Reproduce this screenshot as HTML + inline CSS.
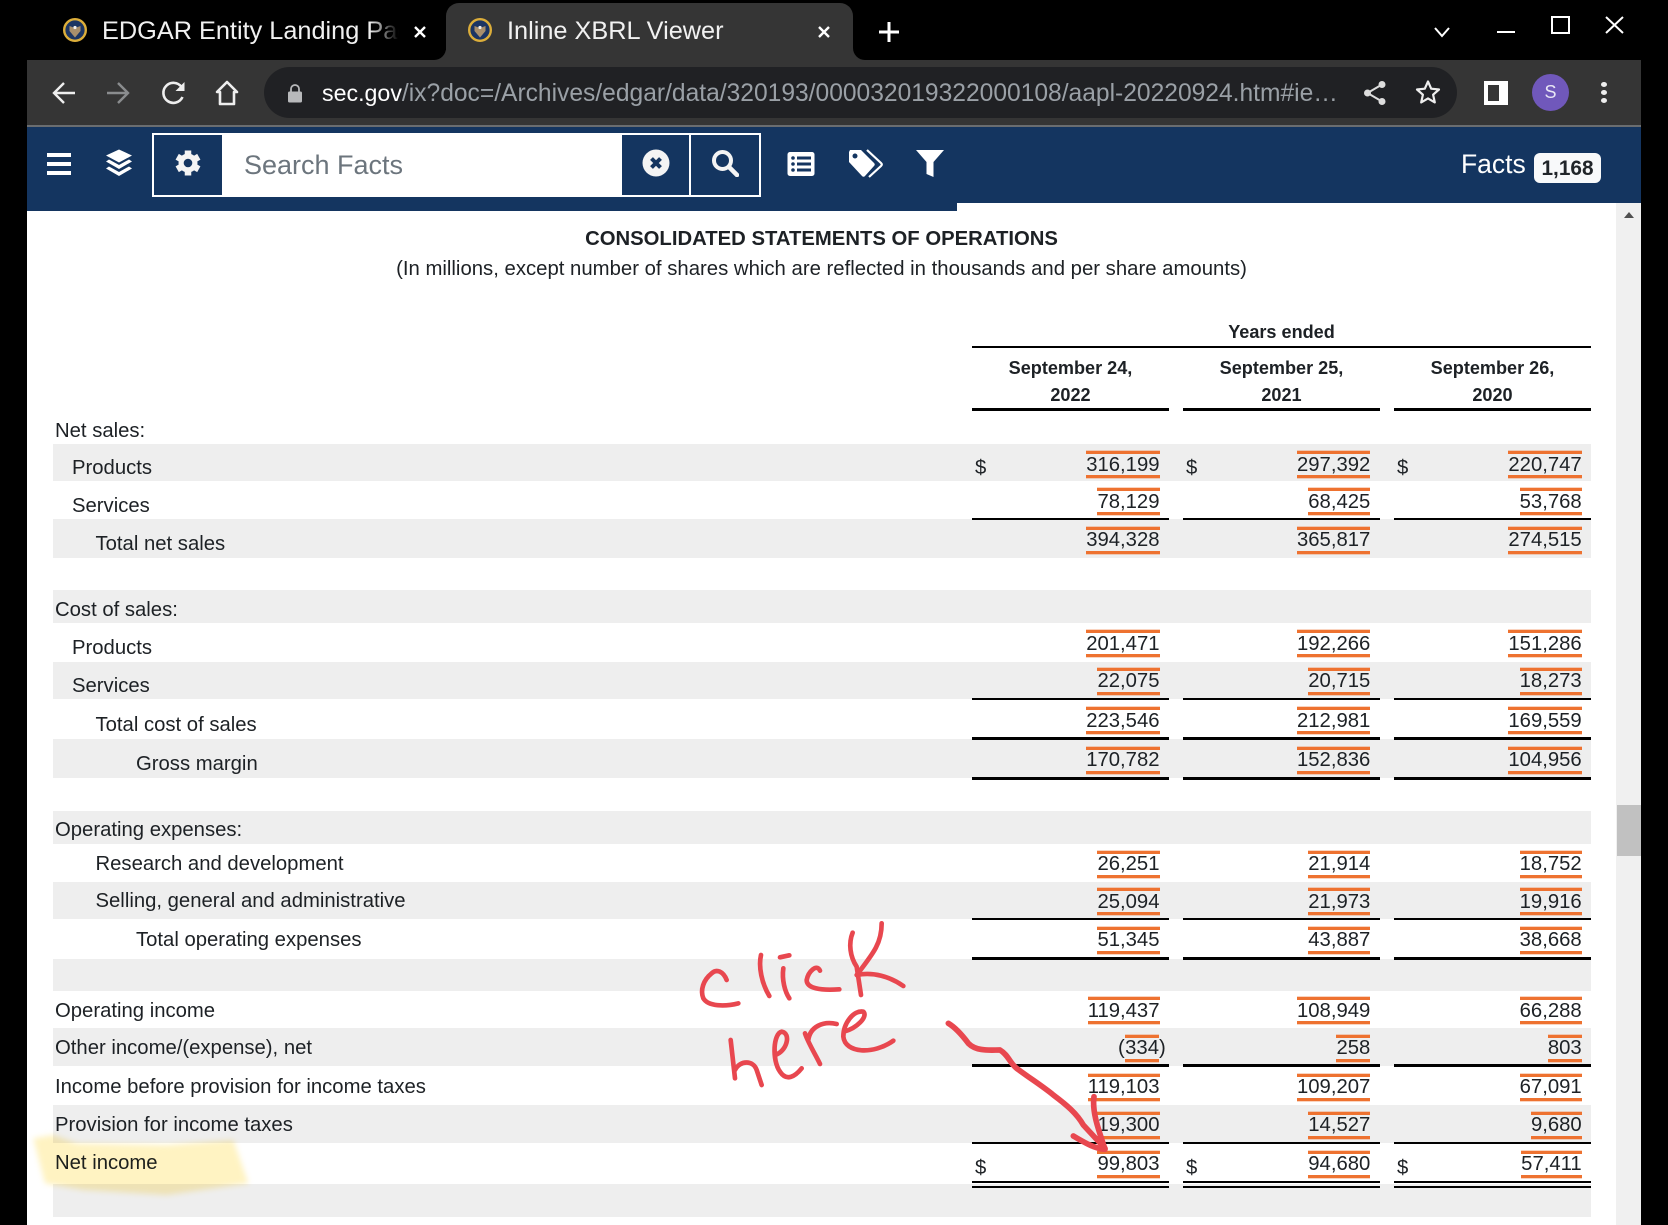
<!DOCTYPE html>
<html>
<head>
<meta charset="utf-8">
<style>
html,body{margin:0;padding:0;background:#000;}
body{position:relative;width:1668px;height:1225px;overflow:hidden;font-family:"Liberation Sans",sans-serif;color:#1d2125;}
div,span,b,svg{position:absolute;}
.bar{background:#eee;left:52.500px;width:1538.500px;}
.ln{background:#000;height:2px;}
.t{height:3px;}
.c1l{left:972px;width:197px;}
.c2l{left:1183px;width:197px;}
.c3l{left:1394px;width:197px;}
.l{font-size:20.300px;line-height:24px;white-space:nowrap;}
.v{font-size:20.300px;line-height:21px;height:21px;font-weight:normal;white-space:nowrap;border-top:3px solid #ee7230;border-bottom:3px solid #ee7230;box-shadow:0 -1px 0 rgba(238,114,48,.3),0 1px 0 rgba(238,114,48,.3);}
.s{line-height:23px;}
.c1{right:508.500px;}
.c2{right:297.700px;}
.c3{right:86.300px;}
.d{font-size:20.300px;line-height:24px;top:456px;}
.h{font-size:18.100px;font-weight:bold;line-height:24px;text-align:center;white-space:nowrap;}
.tabt{font-size:25.300px;line-height:30px;color:#f1f1f1;white-space:nowrap;top:16px;}
</style>
</head>
<body>
<!-- browser chrome -->
<div style="left:446px;top:3px;width:407px;height:60px;background:#353535;border-radius:13px 13px 0 0;"></div>
<div style="left:27px;top:60px;width:1614px;height:65px;background:#353535;"></div>
<div style="left:27px;top:125px;width:1614px;height:2px;background:#6a6d70;"></div>
<div style="left:27px;top:50px;width:419px;height:10px;background:#353535;"></div>
<div style="left:27px;top:40px;width:419px;height:20px;background:#000;border-radius:0 0 12px 0;"></div>
<div style="left:853px;top:40px;width:788px;height:20px;background:#353535;"></div>
<div style="left:853px;top:40px;width:788px;height:20px;background:#000;border-radius:0 0 0 12px;"></div>

<svg style="left:63px;top:18px" width="24" height="24" viewBox="0 0 24 24"><circle cx="12" cy="12" r="10.800" fill="#1c3563" stroke="#dcae3a" stroke-width="2.400"/><path d="M6.500 8l5.500 2 5.500-2v5l-5.500 6.500L6.500 13z" fill="#a98f6c"/><circle cx="12" cy="9.500" r="1.600" fill="#eee"/></svg>
<div class="tabt" style="left:102px;width:297px;overflow:hidden;-webkit-mask-image:linear-gradient(90deg,#000 90%,transparent);mask-image:linear-gradient(90deg,#000 90%,transparent);">EDGAR Entity Landing Page</div>
<svg style="left:413px;top:25px" width="14" height="14" viewBox="0 0 14 14"><path d="M2 2l10 10M12 2L2 12" stroke="#fff" stroke-width="2.400"/></svg>
<svg style="left:468px;top:18px" width="24" height="24" viewBox="0 0 24 24"><circle cx="12" cy="12" r="10.800" fill="#1c3563" stroke="#dcae3a" stroke-width="2.400"/><path d="M6.500 8l5.500 2 5.500-2v5l-5.500 6.500L6.500 13z" fill="#a98f6c"/><circle cx="12" cy="9.500" r="1.600" fill="#eee"/></svg>
<div class="tabt" style="left:507px;">Inline XBRL Viewer</div>
<svg style="left:817px;top:25px" width="14" height="14" viewBox="0 0 14 14"><path d="M2 2l10 10M12 2L2 12" stroke="#fff" stroke-width="2.400"/></svg>
<svg style="left:878px;top:21px" width="22" height="22" viewBox="0 0 22 22"><path d="M11 1v20M1 11h20" stroke="#fff" stroke-width="3"/></svg>
<svg style="left:1433px;top:26px" width="18" height="12" viewBox="0 0 18 12"><path d="M2 2l7 8 7-8" stroke="#fff" stroke-width="2" fill="none"/></svg>
<div style="left:1497px;top:31px;width:18px;height:2px;background:#fff;"></div>
<div style="left:1551px;top:16px;width:15px;height:14px;border:2px solid #fff;"></div>
<svg style="left:1605px;top:16px" width="19" height="18" viewBox="0 0 19 18"><path d="M1 1l17 16M18 1L1 17" stroke="#fff" stroke-width="2"/></svg>

<svg style="left:52px;top:81px" width="24" height="24" viewBox="0 0 24 24"><path d="M23 12H3M12 2L2 12l10 10" stroke="#eee" stroke-width="2.400" fill="none"/></svg>
<svg style="left:106px;top:81px" width="24" height="24" viewBox="0 0 24 24"><path d="M1 12h20M12 2l10 10-10 10" stroke="#8a8c8e" stroke-width="2.400" fill="none"/></svg>
<svg style="left:161px;top:80px" width="25" height="26" viewBox="0 0 25 26"><path d="M21.500 17a10 10 0 1 1-1-10" stroke="#eee" stroke-width="2.600" fill="none"/><path d="M23.500 2v9h-9z" fill="#eee"/></svg>
<svg style="left:215px;top:80px" width="24" height="26" viewBox="0 0 24 26"><path d="M12 2L2 12h3v12h14V12h3z" stroke="#eee" stroke-width="2.600" fill="none" stroke-linejoin="round"/></svg>
<div style="left:264px;top:67px;width:1193px;height:51px;background:#202124;border-radius:26px;"></div>
<svg style="left:287px;top:84px" width="16" height="19" viewBox="0 0 16 19"><path d="M4 8V5a4 4 0 0 1 8 0v3" stroke="#b8b9bb" stroke-width="1.800" fill="none"/><rect x="1" y="7.500" width="14" height="11" rx="1.500" fill="#b8b9bb"/></svg>
<div style="left:322px;top:78px;font-size:24.600px;line-height:30px;white-space:nowrap;color:#9aa0a6;"><span style="position:static;color:#fff;font-size:23.200px;">sec.gov</span>/ix?doc=/Archives/edgar/data/320193/000032019322000108/aapl-20220924.htm#ie…</div>
<svg style="left:1363px;top:80px" width="23" height="26" viewBox="0 0 23 26"><circle cx="19" cy="4.500" r="3.500" fill="#ddd"/><circle cx="4.500" cy="13" r="3.500" fill="#ddd"/><circle cx="19" cy="21.500" r="3.500" fill="#ddd"/><path d="M19 4.500L4.500 13 19 21.500" stroke="#ddd" stroke-width="2" fill="none"/></svg>
<svg style="left:1415px;top:79px" width="26" height="26" viewBox="0 0 26 26"><path d="M13 2.500l3.200 7.200 7.800.8-5.900 5.200 1.700 7.700L13 19.400l-6.800 4 1.700-7.700L2 10.500l7.800-.8z" stroke="#eee" stroke-width="2.200" fill="none" stroke-linejoin="round"/></svg>
<div style="left:1484px;top:81px;width:24px;height:24px;background:#fff;"></div>
<div style="left:1488px;top:85px;width:11px;height:16px;background:#353535;"></div>
<div style="left:1532px;top:74px;width:37px;height:37px;border-radius:50%;background:#7058bb;"></div>
<div style="left:1532px;top:74px;width:37px;height:37px;line-height:37px;text-align:center;color:#e8e6f5;font-size:18px;">S</div>
<div style="left:1601px;top:82px;width:6px;height:5px;border-radius:50%;background:#eee;"></div>
<div style="left:1601px;top:90px;width:6px;height:5px;border-radius:50%;background:#eee;"></div>
<div style="left:1601px;top:98px;width:6px;height:5px;border-radius:50%;background:#eee;"></div>

<!-- content background -->
<div style="left:27px;top:127px;width:1614px;height:1098px;background:#fff;"></div>
<div style="left:27px;top:127px;width:1614px;height:76px;background:#143560;"></div>
<div style="left:27px;top:203px;width:930px;height:8px;background:#143560;"></div>
<div style="left:1616px;top:203px;width:25px;height:1022px;background:#f0f0f0;"></div>
<div style="left:1617px;top:805px;width:24px;height:51px;background:#c1c1c1;"></div>
<svg style="left:1623px;top:211px" width="12" height="8" viewBox="0 0 12 8"><path d="M6 1l5 6H1z" fill="#505050"/></svg>

<!-- xbrl toolbar -->
<div style="left:47px;top:153px;width:24px;height:4px;background:#fff;"></div>
<div style="left:47px;top:162px;width:24px;height:4px;background:#fff;"></div>
<div style="left:47px;top:171px;width:24px;height:4px;background:#fff;"></div>
<svg style="left:105px;top:149px" width="28" height="29" viewBox="0 0 28 29"><path d="M14 .5L27 6.500 14 13.500 1 6.500z" fill="#fff"/><path d="M4 10.500L1 12.500 14 20 27 12.500 24 10.500 14 16z" fill="#fff"/><path d="M4 17.500L1 19.500 14 27 27 19.500 24 17.500 14 23z" fill="#fff"/></svg>
<div style="left:152px;top:133px;width:605px;height:60px;border:2px solid #fff;"></div>
<div style="left:222px;top:134px;width:400px;height:62px;background:#fff;"></div>
<div style="left:689px;top:134px;width:2px;height:62px;background:#fff;"></div>
<svg style="left:175px;top:150px" width="26" height="26" viewBox="0 0 26 26"><circle cx="13" cy="13" r="9.500" fill="#f4f4f4"/><g stroke="#f4f4f4" stroke-width="6.500"><path d="M13 0.500v25"/><path d="M2.200 6.750l21.600 12.500"/><path d="M23.800 6.750L2.200 19.250"/></g><circle cx="13" cy="13" r="4.300" fill="#143560"/></svg>
<div style="left:244px;top:149px;font-size:27px;line-height:32px;color:#6c757d;white-space:nowrap;">Search Facts</div>
<svg style="left:642px;top:149px" width="28" height="28" viewBox="0 0 28 28"><circle cx="14" cy="14" r="13.500" fill="#f4f4f4"/><path d="M9.500 9.500l9 9M18.500 9.500l-9 9" stroke="#143560" stroke-width="4"/></svg>
<svg style="left:711px;top:149px" width="28" height="28" viewBox="0 0 28 28"><circle cx="11.500" cy="11.500" r="8.500" fill="none" stroke="#f4f4f4" stroke-width="4"/><path d="M18 18l8 8" stroke="#f4f4f4" stroke-width="4.500" stroke-linecap="round"/></svg>
<svg style="left:787px;top:151px" width="28" height="26" viewBox="0 0 28 26"><rect x="0.500" y="1" width="27" height="24" rx="2.500" fill="#fff"/><g fill="#143560"><circle cx="6" cy="7" r="1.800"/><circle cx="6" cy="13" r="1.800"/><circle cx="6" cy="19" r="1.800"/><rect x="10" y="5.500" width="14" height="3"/><rect x="10" y="11.500" width="14" height="3"/><rect x="10" y="17.500" width="14" height="3"/></g></svg>
<svg style="left:848px;top:149px" width="36" height="30" viewBox="0 0 36 30"><path d="M2 1h11l13 13c1 1 1 2 0 3L17 27c-1 1-2 1-3 0L1 13V3z" fill="#fff"/><circle cx="7" cy="7" r="2.500" fill="#143560"/><path d="M19 1l14 13c1 1 1 2 0 3L21 28" stroke="#fff" stroke-width="2.200" fill="none"/></svg>
<svg style="left:916px;top:149px" width="28" height="29" viewBox="0 0 28 29"><path d="M0 1h28L17.500 13v15L10.500 25V13z" fill="#fff"/></svg>
<div style="left:1461px;top:148px;font-size:26.500px;line-height:32px;color:#fff;white-space:nowrap;">Facts</div>
<div style="left:1534px;top:153px;width:67px;height:30px;background:#f8f9fa;border-radius:6px;text-align:center;font-size:20.800px;font-weight:bold;line-height:31px;color:#212529;">1,168</div>

<!-- rows -->
<div class="bar" style="top:444px;height:37px"></div>
<div class="bar" style="top:519px;height:39px"></div>
<div class="bar" style="top:590px;height:33px"></div>
<div class="bar" style="top:662px;height:37px"></div>
<div class="bar" style="top:739px;height:39px"></div>
<div class="bar" style="top:811px;height:33px"></div>
<div class="bar" style="top:882px;height:37px"></div>
<div class="bar" style="top:959px;height:32px"></div>
<div class="bar" style="top:1028px;height:38px"></div>
<div class="bar" style="top:1105px;height:38px"></div>
<div class="bar" style="top:1184px;height:33px"></div>

<!-- headings -->
<div class="h" style="left:27px;width:1589px;top:227px;font-size:20.300px;">CONSOLIDATED STATEMENTS OF OPERATIONS</div>
<div class="h" style="left:27px;width:1589px;top:257px;font-size:20.330px;font-weight:normal;">(In millions, except number of shares which are reflected in thousands and per share amounts)</div>
<div class="h" style="left:972px;width:619px;top:320px;">Years ended</div>
<div class="ln" style="left:972px;width:619px;top:346px;"></div>
<div class="h c1l" style="top:356px;">September 24,</div><div class="h c1l" style="top:383px;">2022</div>
<div class="h c2l" style="top:356px;">September 25,</div><div class="h c2l" style="top:383px;">2021</div>
<div class="h c3l" style="top:356px;">September 26,</div><div class="h c3l" style="top:383px;">2020</div>
<div class="ln c1l" style="top:408px;height:3px"></div><div class="ln c2l" style="top:408px;height:3px"></div><div class="ln c3l" style="top:408px;height:3px"></div>

<!-- labels -->
<div class="l" style="left:55px;top:419px;">Net sales:</div>
<div class="l" style="left:72px;top:456px;">Products</div>
<div class="l" style="left:72px;top:494px;">Services</div>
<div class="l" style="left:95.500px;top:532px;">Total net sales</div>
<div class="l" style="left:55px;top:598px;">Cost of sales:</div>
<div class="l" style="left:72px;top:636px;">Products</div>
<div class="l" style="left:72px;top:674px;">Services</div>
<div class="l" style="left:95.500px;top:713px;">Total cost of sales</div>
<div class="l" style="left:136px;top:752px;">Gross margin</div>
<div class="l" style="left:55px;top:818px;">Operating expenses:</div>
<div class="l" style="left:95.500px;top:852px;">Research and development</div>
<div class="l" style="left:95.500px;top:889px;">Selling, general and administrative</div>
<div class="l" style="left:136px;top:928px;">Total operating expenses</div>
<div class="l" style="left:55px;top:999px;">Operating income</div>
<div class="l" style="left:55px;top:1036px;">Other income/(expense), net</div>
<div class="l" style="left:55px;top:1075px;">Income before provision for income taxes</div>
<div class="l" style="left:55px;top:1113px;">Provision for income taxes</div>
<div class="l" style="left:55px;top:1151px;">Net income</div>

<!-- dollars -->
<div class="d" style="left:975px;">$</div><div class="d" style="left:1186px;">$</div><div class="d" style="left:1397px;">$</div>
<div class="d" style="left:975px;top:1156px;">$</div><div class="d" style="left:1186px;top:1156px;">$</div><div class="d" style="left:1397px;top:1156px;">$</div>

<!-- values -->
<b class="v s c1" style="top:451px">316,199</b><b class="v s c2" style="top:451px">297,392</b><b class="v s c3" style="top:451px">220,747</b>
<b class="v s c1" style="top:488px">78,129</b><b class="v s c2" style="top:488px">68,425</b><b class="v s c3" style="top:488px">53,768</b>
<b class="v c1" style="top:527px">394,328</b><b class="v c2" style="top:527px">365,817</b><b class="v c3" style="top:527px">274,515</b>
<b class="v s c1" style="top:630px">201,471</b><b class="v s c2" style="top:630px">192,266</b><b class="v s c3" style="top:630px">151,286</b>
<b class="v c1" style="top:668px">22,075</b><b class="v c2" style="top:668px">20,715</b><b class="v c3" style="top:668px">18,273</b>
<b class="v s c1" style="top:707px">223,546</b><b class="v s c2" style="top:707px">212,981</b><b class="v s c3" style="top:707px">169,559</b>
<b class="v c1" style="top:747px">170,782</b><b class="v c2" style="top:747px">152,836</b><b class="v c3" style="top:747px">104,956</b>
<b class="v c1" style="top:851px">26,251</b><b class="v c2" style="top:851px">21,914</b><b class="v c3" style="top:851px">18,752</b>
<b class="v s c1" style="top:888px">25,094</b><b class="v s c2" style="top:888px">21,973</b><b class="v s c3" style="top:888px">19,916</b>
<b class="v c1" style="top:927px">51,345</b><b class="v c2" style="top:927px">43,887</b><b class="v c3" style="top:927px">38,668</b>
<b class="v s c1" style="top:997px">119,437</b><b class="v s c2" style="top:997px">108,949</b><b class="v s c3" style="top:997px">66,288</b>
<b class="v" style="top:1035px;right:509px">334</b><div class="l" style="left:1118px;top:1036px;">(</div><div class="l" style="left:1159px;top:1036px;">)</div><b class="v c2" style="top:1035px">258</b><b class="v c3" style="top:1035px">803</b>
<b class="v c1" style="top:1074px">119,103</b><b class="v c2" style="top:1074px">109,207</b><b class="v c3" style="top:1074px">67,091</b>
<b class="v c1" style="top:1112px">19,300</b><b class="v c2" style="top:1112px">14,527</b><b class="v c3" style="top:1112px">9,680</b>
<b class="v c1" style="top:1151px">99,803</b><b class="v c2" style="top:1151px">94,680</b><b class="v c3" style="top:1151px">57,411</b>

<!-- lines -->
<div class="ln c1l" style="top:518px"></div><div class="ln c2l" style="top:518px"></div><div class="ln c3l" style="top:518px"></div>
<div class="ln c1l" style="top:698px"></div><div class="ln c2l" style="top:698px"></div><div class="ln c3l" style="top:698px"></div>
<div class="ln t c1l" style="top:737px"></div><div class="ln t c2l" style="top:737px"></div><div class="ln t c3l" style="top:737px"></div>
<div class="ln t c1l" style="top:777px"></div><div class="ln t c2l" style="top:777px"></div><div class="ln t c3l" style="top:777px"></div>
<div class="ln c1l" style="top:918px"></div><div class="ln c2l" style="top:918px"></div><div class="ln c3l" style="top:918px"></div>
<div class="ln t c1l" style="top:957px"></div><div class="ln t c2l" style="top:957px"></div><div class="ln t c3l" style="top:957px"></div>
<div class="ln t c1l" style="top:1064px"></div><div class="ln t c2l" style="top:1064px"></div><div class="ln t c3l" style="top:1064px"></div>
<div class="ln c1l" style="top:1142px"></div><div class="ln c2l" style="top:1142px"></div><div class="ln c3l" style="top:1142px"></div>
<div class="ln c1l" style="top:1181px"></div><div class="ln c2l" style="top:1181px"></div><div class="ln c3l" style="top:1181px"></div>
<div class="ln c1l" style="top:1186px"></div><div class="ln c2l" style="top:1186px"></div><div class="ln c3l" style="top:1186px"></div>

<!-- highlight -->
<svg style="left:0;top:1050px;mix-blend-mode:multiply" width="400" height="175" viewBox="0 0 1200 525"><path d="M100 265L160 255 230 280 500 285 700 270 745 400 500 435 250 420 135 400Z" fill="#fff3c2" style="filter:blur(9px)"/></svg>

<!-- handwriting -->
<svg style="left:660px;top:900px" width="520" height="325" viewBox="0 0 1560 975">
<g fill="none" stroke="#e8474f" stroke-width="14" stroke-linecap="round" stroke-linejoin="round">
<path d="M200 240C190 215 170 205 155 220 130 240 120 270 130 295 145 320 195 320 235 310"/>
<path d="M303 165C295 200 305 250 328 288"/>
<path d="M370 205C365 240 375 275 388 295"/>
<path d="M360 172L388 166"/>
<path d="M480 212C470 190 445 215 440 240 440 265 480 272 538 268"/>
<path d="M578 98C565 130 570 170 590 200L603 285"/>
<path d="M665 70C665 130 640 160 590 225 640 215 690 230 730 258"/>
<path d="M212 420L225 535"/>
<path d="M225 510C240 480 280 480 290 510L305 555"/>
<path d="M345 465C380 455 395 400 365 395 340 400 335 480 360 515 380 545 405 530 425 505"/>
<path d="M435 400C445 430 470 470 480 492"/>
<path d="M445 420C450 380 490 362 530 372"/>
<path d="M552 395C590 385 625 350 610 335 580 330 550 370 550 410 555 460 640 465 700 422"/>
<path stroke-width="17" d="M865 370C890 385 910 410 925 430 950 455 990 450 1020 450 1045 465 1050 490 1070 505 1110 535 1150 560 1180 585 1220 615 1250 640 1270 675L1335 745"/>
<path stroke-width="17" d="M1302 590C1295 640 1320 700 1335 748 1300 745 1270 725 1240 708"/>
</g>
</svg>
</body>
</html>
